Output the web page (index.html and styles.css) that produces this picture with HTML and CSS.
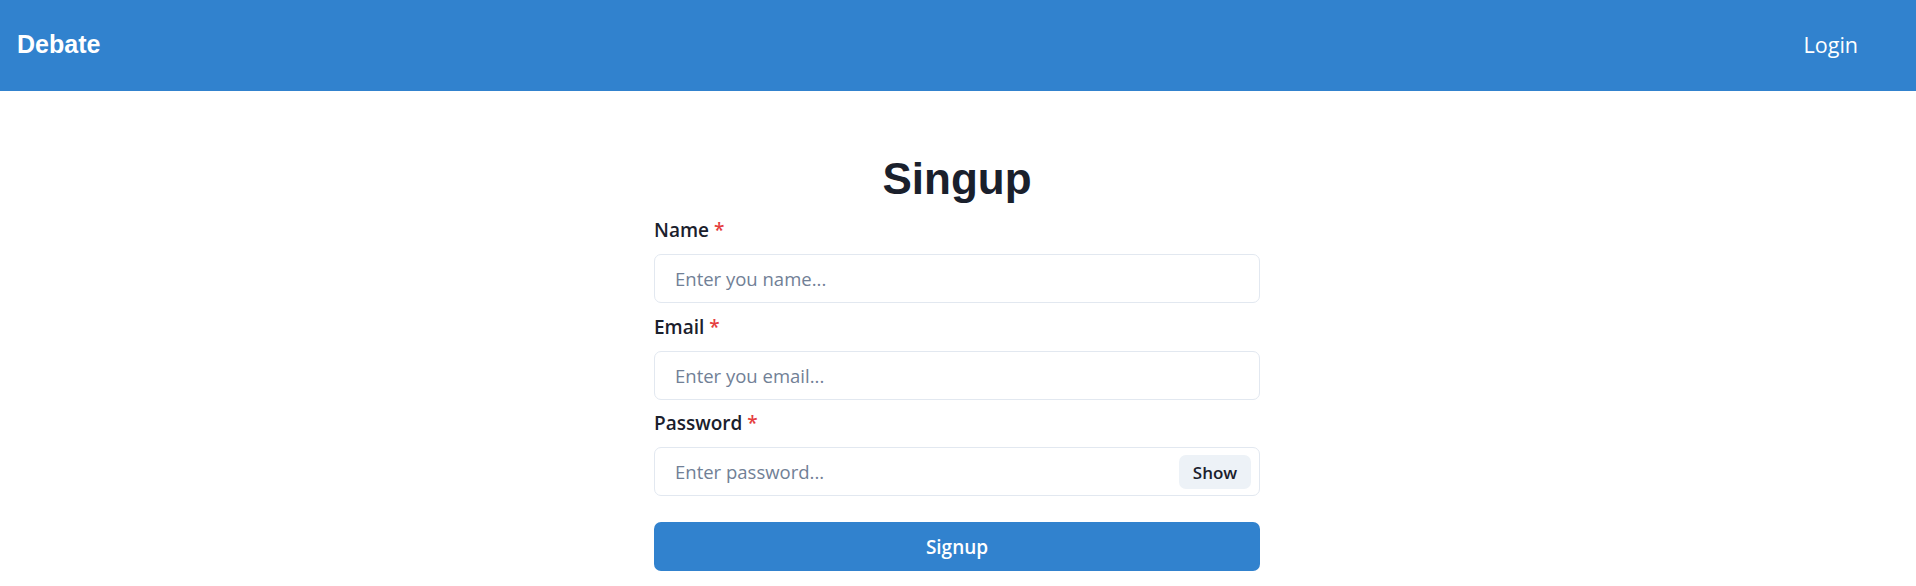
FILE: index.html
```html
<!DOCTYPE html>
<html lang="en">
<head>
<meta charset="utf-8">
<title>Debate - Signup</title>
<link rel="stylesheet" href="styles.css">
</head>
<body>
<header class="topbar">
  <a class="brand" href="#">Debate</a>
  <a class="nav-link" href="#">Login</a>
</header>
<main class="page">
  <form class="signup">
    <h1 class="title">Singup</h1>
    <div class="field">
      <label class="label">Name<span class="req">*</span></label>
      <input class="input" type="text" placeholder="Enter you name...">
    </div>
    <div class="field">
      <label class="label">Email<span class="req">*</span></label>
      <input class="input" type="email" placeholder="Enter you email...">
    </div>
    <div class="field">
      <label class="label">Password<span class="req">*</span></label>
      <div class="input-group">
        <input class="input" type="password" placeholder="Enter password...">
        <button type="button" class="show-btn">Show</button>
      </div>
    </div>
    <button type="button" class="submit">Signup</button>
  </form>
</main>
</body>
</html>
```

FILE: styles.css
```css
* { box-sizing: border-box; }
html, body { margin: 0; padding: 0; }
body {
  font-family: "Open Sans", "Noto Sans", sans-serif;
  color: #1a202c;
  background: #ffffff;
}
.topbar {
  height: 91px;
  background: #3182ce;
  display: flex;
  align-items: center;
  justify-content: space-between;
  padding: 0 58px 3px 17px;
}
.brand {
  font-family: "Liberation Sans", Arial, sans-serif;
  font-weight: 700;
  font-size: 25px;
  color: #ffffff;
  text-decoration: none;
}
.nav-link {
  font-size: 21.5px;
  color: #ffffff;
  text-decoration: none;
}
.page {
  padding-top: 63px;
  padding-right: 2px;
  display: flex;
  justify-content: center;
}
.signup {
  width: 606px;
  display: flex;
  flex-direction: column;
}
.title {
  margin: 0 0 13px;
  font-family: "Liberation Sans", Arial, sans-serif;
  font-weight: 700;
  font-size: 44px;
  line-height: 50px;
  text-align: center;
  color: #1a202c;
}
.field {
  display: flex;
  flex-direction: column;
  margin-bottom: 10.5px;
}
.label {
  font-size: 19px;
  font-weight: 600;
  line-height: 24px;
  padding-top: 1px;
  margin-bottom: 12px;
  color: #1a202c;
}
.req {
  color: #e53e3e;
  margin-left: 5px;
}
.input {
  width: 100%;
  height: 49px;
  border: 1px solid #e2e8f0;
  border-radius: 7px;
  padding: 0 20px;
  font-family: "Open Sans", "Noto Sans", sans-serif;
  font-size: 18.5px;
  color: #1a202c;
  background: #ffffff;
  outline: none;
}
.input::placeholder { color: #718096; opacity: 1; }
.input-group {
  position: relative;
}
.input-group .input { padding-right: 90px; }
.show-btn {
  position: absolute;
  top: 8px;
  right: 9px;
  width: 72px;
  height: 34px;
  border: 0;
  border-radius: 7px;
  background: #edf2f7;
  font-family: "Open Sans", "Noto Sans", sans-serif;
  font-size: 17px;
  font-weight: 600;
  color: #1a202c;
  padding: 0;
}
.submit {
  margin-top: 15.5px;
  height: 49px;
  width: 100%;
  border: 0;
  border-radius: 7px;
  background: #3182ce;
  color: #ffffff;
  font-family: "Open Sans", "Noto Sans", sans-serif;
  font-size: 19px;
  font-weight: 600;
}
```
